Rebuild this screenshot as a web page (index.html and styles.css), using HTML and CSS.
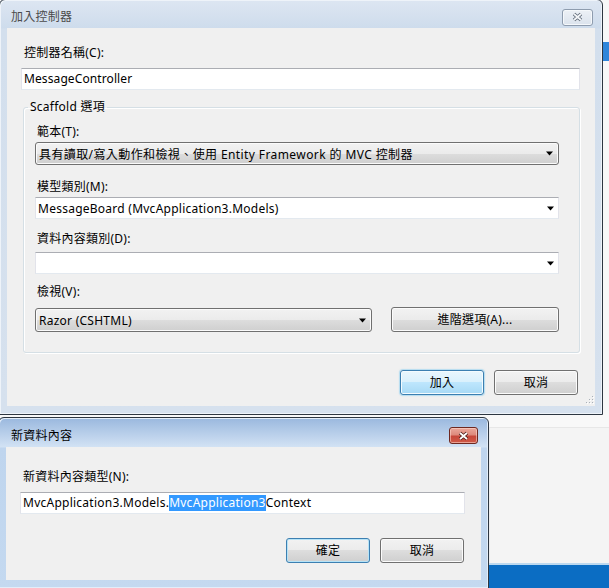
FILE: index.html
```html
<!DOCTYPE html>
<html lang="zh-Hant">
<head>
<meta charset="utf-8">
<title>加入控制器</title>
<link rel="stylesheet" href="styles.css">
</head>
<body>
<div class="desk">
  <div class="desk-blue"></div>
  <div class="desk-panel"></div>
  <div class="desk-bar"></div>

  <div class="win win-main">
    <div class="titlebar titlebar-main">
      <span class="title title-inactive">加入控制器</span>
      <span class="closebtn closebtn-inactive">
        <svg width="13" height="10" viewBox="0 0 13 10"><path d="M3 2l7 6M10 2l-7 6" stroke="#5d6876" stroke-width="3.6"/><path d="M3 2l7 6M10 2l-7 6" stroke="#f4f6f9" stroke-width="1.8"/></svg>
      </span>
    </div>
    <div class="client client-main">
      <div class="lbl">控制器名稱(C):</div>
      <div class="tb tb-name">MessageController</div>
      <fieldset class="grp">
        <legend class="grp-legend">Scaffold 選項</legend>
        <div class="grp-inner">
          <div class="lbl">範本(T):</div>
          <div class="combo combo-btn combo-template">
            <span class="combo-text">具有讀取/寫入動作和檢視、使用 Entity Framework 的 MVC 控制器</span>
            <svg class="arrow" width="7" height="5" viewBox="0 0 7 5"><path d="M0 0.5h7l-3.5 4z" fill="#000"/></svg>
          </div>
          <div class="lbl lbl-model">模型類別(M):</div>
          <div class="combo combo-edit combo-model">
            <span class="combo-text">MessageBoard (MvcApplication3.Models)</span>
            <svg class="arrow" width="7" height="5" viewBox="0 0 7 5"><path d="M0 0.5h7l-3.5 4z" fill="#000"/></svg>
          </div>
          <div class="lbl lbl-ctx">資料內容類別(D):</div>
          <div class="combo combo-edit combo-ctx">
            <span class="combo-text"></span>
            <svg class="arrow" width="7" height="5" viewBox="0 0 7 5"><path d="M0 0.5h7l-3.5 4z" fill="#000"/></svg>
          </div>
          <div class="lbl lbl-view">檢視(V):</div>
          <div class="view-row">
            <div class="combo combo-btn combo-view">
              <span class="combo-text">Razor (CSHTML)</span>
              <svg class="arrow" width="7" height="5" viewBox="0 0 7 5"><path d="M0 0.5h7l-3.5 4z" fill="#000"/></svg>
            </div>
            <button class="btn btn-adv">進階選項(A)...</button>
          </div>
        </div>
      </fieldset>
      <div class="btnrow btnrow-main">
        <button class="btn btn-focus">加入</button>
        <button class="btn">取消</button>
      </div>
      <svg class="grip" width="10" height="10" viewBox="0 0 10 10">
        <g fill="#fff"><rect x="9" y="2" width="1" height="1"/><rect x="9" y="5" width="1" height="1"/><rect x="6" y="5" width="1" height="1"/><rect x="9" y="8" width="1" height="1"/><rect x="6" y="8" width="1" height="1"/><rect x="3" y="8" width="1" height="1"/></g>
        <g fill="#a9b0b8"><rect x="8" y="1" width="1" height="1"/><rect x="8" y="4" width="1" height="1"/><rect x="5" y="4" width="1" height="1"/><rect x="8" y="7" width="1" height="1"/><rect x="5" y="7" width="1" height="1"/><rect x="2" y="7" width="1" height="1"/></g>
      </svg>
    </div>
  </div>

  <div class="win win-sub">
    <div class="titlebar titlebar-sub">
      <span class="title">新資料內容</span>
      <span class="closebtn closebtn-active">
        <svg width="13" height="10" viewBox="0 0 13 10"><path d="M3 2l7 6M10 2l-7 6" stroke="#4a1c17" stroke-width="3.6"/><path d="M3 2l7 6M10 2l-7 6" stroke="#fff" stroke-width="1.8"/></svg>
      </span>
    </div>
    <div class="client client-sub">
      <div class="lbl">新資料內容類型(N):</div>
      <div class="tb tb-ctx">MvcApplication3.Models.<span class="sel">MvcApplication3</span>Context</div>
      <div class="btnrow btnrow-sub">
        <button class="btn btn-default">確定</button>
        <button class="btn">取消</button>
      </div>
    </div>
  </div>
</div>
</body>
</html>
```
FILE: styles.css
```css
* { box-sizing: border-box; }
html, body { margin: 0; padding: 0; }
body {
  width: 609px;
  height: 588px;
  overflow: hidden;
  font-family: "Noto Sans", "Noto Sans CJK TC", sans-serif;
  font-size: 12px;
  letter-spacing: 0.25px;
  color: #000;
}
.desk {
  position: relative;
  width: 609px;
  height: 588px;
  background: #f8f8f8;
  overflow: hidden;
}
.desk-blue {
  position: absolute;
  left: 603px;
  top: 42px;
  width: 6px;
  height: 19px;
  background: #2f86db;
}
.desk-panel {
  position: absolute;
  left: 489px;
  top: 427px;
  width: 120px;
  height: 138px;
  border-top: 1px solid #e7e7e7;
  border-left: 1px solid #ececec;
  background: #f4f4f4;
}
.desk-bar {
  position: absolute;
  left: 488px;
  top: 563px;
  width: 121px;
  height: 25px;
  background: #0b6dc3;
  border-top: 2px solid #bcd8ef;
}

/* windows */
.win {
  position: absolute;
  display: flex;
  flex-direction: column;
  border: 1px solid #2d3641;
  border-radius: 6px 6px 0 0;
}
.win-main {
  left: -1px;
  top: -1px;
  width: 604px;
  height: 416px;
  background: linear-gradient(#dde6f2 0, #cedcec 28px, #d3dfed 29px, #d6e1ee 100%);
  box-shadow: inset 1px 1px 0 #eef3f9, inset -1px -1px 0 #eef3f9;
}
.win-sub {
  left: -2px;
  top: 417px;
  width: 491px;
  height: 172px;
  background: linear-gradient(#9ab8de 0, #d2e2f4 29px, #bfd5ee 30px, #c4d9f0 100%);
  box-shadow: inset 1px 1px 0 #e2edf9, inset -1px -1px 0 #e2edf9;
}
.titlebar {
  flex: none;
  display: flex;
  align-items: center;
  justify-content: space-between;
  padding-top: 6px;
}
.titlebar-main { height: 28px; padding-left: 11px; padding-right: 9px; }
.titlebar-sub { height: 29px; padding-left: 12px; padding-right: 10px; }
.title { line-height: 16px; color: #000; }
.title-inactive { color: #4b4b4b; }
.closebtn {
  display: flex;
  align-items: center;
  justify-content: center;
  height: 17px;
  border-radius: 3px;
}
.closebtn-inactive {
  width: 31px;
  border: 1px solid #8e9cae;
  background: linear-gradient(#edf1f6, #dbe3ed);
  box-shadow: inset 0 0 0 1px #f5f8fb;
}
.closebtn-active {
  width: 29px;
  border: 1px solid #6e2820;
  background: linear-gradient(#eaa79b 0%, #de8a7c 45%, #c7473a 55%, #d05a48 100%);
  box-shadow: inset 0 0 0 1px rgba(255, 220, 210, 0.55);
}

/* client areas */
.client {
  position: relative;
  flex: 1;
  display: flex;
  flex-direction: column;
  margin: 0 7px 8px;
  background: #f0f0f0;
}
.client-main { padding: 17px 15px 0 14px; }
.client-sub { padding: 22px 16px 0 14px; }

.lbl { line-height: 16px; padding-left: 3px; white-space: nowrap; }

.tb {
  margin-top: 7px;
  height: 22px;
  padding-left: 2px;
  line-height: 20px;
  background: #fff;
  border: 1px solid #e2e3ea;
  border-top-color: #abadb3;
  border-bottom-color: #e3e9ef;
  white-space: nowrap;
}
.tb-name { letter-spacing: 0.1px; }
.sel {
  display: inline-block;
  line-height: 16px;
  background: #3399ff;
  color: #fff;
}

/* group box */
.grp {
  margin: 9px 0 0 2px;
  padding: 0;
  min-width: 0;
  border: 1px solid #d5dfe5;
  border-radius: 3px;
  box-shadow: inset 1px 1px 0 #fff, 1px 1px 0 #fff;
}
.grp-legend {
  margin-left: 4px;
  padding: 0 2px;
  line-height: 16px;
}
.grp-inner {
  display: flex;
  flex-direction: column;
  padding: 9px 20px 20px 11px;
}
.grp-inner .lbl { padding-left: 2px; }
.lbl-model { margin-top: 14px; }
.lbl-ctx { margin-top: 12px; }
.lbl-view { margin-top: 10px; }

/* combos */
.combo {
  display: flex;
  align-items: center;
  white-space: nowrap;
}
.combo-text { flex: 1; overflow: hidden; }
.combo-template .combo-text { letter-spacing: 0.4px; }
.arrow { flex: none; }
.combo-btn {
  border: 1px solid #707070;
  border-radius: 3px;
  background: linear-gradient(#f2f2f2 0%, #ebebeb 50%, #dddddd 50%, #cfcfcf 100%);
  box-shadow: inset 0 0 0 1px #fbfbfb;
  padding: 0 5px 0 3px;
}
.combo-template { margin-top: 2px; height: 23px; }
.combo-edit {
  background: #fff;
  border: 1px solid #e2e3ea;
  border-top-color: #abadb3;
  border-bottom-color: #e3e9ef;
  padding: 0 4px 0 2px;
  height: 22px;
}
.combo-model { margin-top: 2px; }
.combo-ctx { margin-top: 5px; }
.view-row {
  display: flex;
  align-items: flex-start;
  gap: 19px;
  margin-top: 7px;
}
.combo-view { width: 337px; height: 24px; margin-top: 1px; }

/* buttons */
.btn {
  width: 84px;
  height: 25px;
  padding: 0;
  margin: 0;
  font: inherit;
  letter-spacing: inherit;
  color: #000;
  line-height: 16px;
  border: 1px solid #707070;
  border-radius: 3px;
  background: linear-gradient(#f2f2f2 0%, #ebebeb 50%, #dddddd 50%, #cfcfcf 100%);
  box-shadow: inset 0 0 0 1px #fbfbfb;
}
.btn-adv { width: 168px; }
.btn-focus {
  border-color: #3c7fb1;
  background: linear-gradient(#eaf6fd 0%, #d9f0fc 50%, #bee6fd 50%, #a7d9f5 100%);
  box-shadow: inset 0 0 0 1px #f4fbfe, 0 0 1px 1px rgba(120, 200, 240, 0.5);
}
.btn-default {
  border-color: #3c7fb1;
  box-shadow: inset 0 0 0 1px #b6e3f7;
}
.btnrow {
  display: flex;
  justify-content: flex-end;
  gap: 10px;
}
.btnrow-main { margin-top: 17px; padding-right: 2px; }
.btnrow-sub { margin-top: 24px; padding-right: 1px; }

.grip {
  position: absolute;
  right: 1px;
  bottom: 1px;
}
```
